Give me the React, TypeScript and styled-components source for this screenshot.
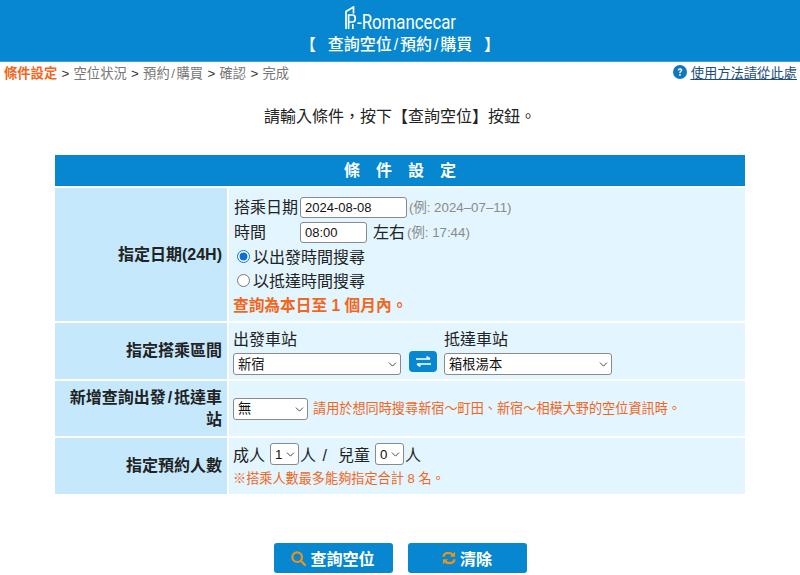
import styled, { createGlobalStyle } from "styled-components";
import { ChevronDown } from "lucide-react";

const FONT = '"Liberation Sans", "Noto Sans CJK TC", sans-serif';

const GlobalStyle = createGlobalStyle`
html, body {
    margin: 0;
    padding: 0;
    background: #fff;
    font-family: ${FONT};
    color: #222;
}
* {
    box-sizing: border-box;
}
`;

const steps = ["空位状況", "預約/購買", "確認", "完成"];

// the slash is wider in the reference than in Liberation Sans
function withSlash(text: string) {
    return text.split("/").map((part, i) => (
        <span key={part}>
            {i > 0 && <Slash>/</Slash>}
            {part}
        </span>
    ));
}

function Picker({ value, width }: { value: string; width: number }) {
    return (
        <PickerWrap $width={width}>
            <PickerSelect defaultValue={value}>
                <option>{value}</option>
            </PickerSelect>
            <PickerArrow><ChevronDown size={13} strokeWidth={1.8} /></PickerArrow>
        </PickerWrap>
    );
}

export default function App() {
    return (
        <Page>
            <GlobalStyle />
            <Header>
                <Logo>
                    <svg width="12" height="23" viewBox="0 0 12 23" fill="none" stroke="#fff" strokeWidth="1.7">
                        <path d="M1 23V5.5L8.5 1V7.5" />
                        <path d="M3.6 23V9H7.6C11.2 9 11.2 16 7.6 16H3.6" />
                        <path d="M7.8 23V18" />
                    </svg>
                    <LogoText>-Romancecar</LogoText>
                </Logo>
                <HeaderTitle>
                    <span>【</span>
                    <span>{withSlash("查詢空位/預約/購買")}</span>
                    <span>】</span>
                </HeaderTitle>
            </Header>

            <Crumbs>
                <Steps>
                    <ActiveStep>條件設定</ActiveStep>
                    {steps.map((s) => (
                        <span key={s}>
                            <Sep>&gt;</Sep>
                            <Step>{withSlash(s)}</Step>
                        </span>
                    ))}
                </Steps>
                <HelpLink href="#">
                    <svg width="14" height="14" viewBox="0 0 14 14">
                        <circle cx="7" cy="7" r="7" fill="#0f78bd" />
                        <path d="M4.7 5.4C4.8 3.9 5.8 3.2 7.1 3.2C8.4 3.2 9.4 4 9.4 5.1C9.4 6.5 7.7 6.6 7.7 8.1H6.2C6.2 6.1 7.7 6 7.7 5.2C7.7 4.8 7.4 4.6 7 4.6C6.6 4.6 6.3 4.9 6.2 5.4Z" fill="#fff" />
                        <rect x="6.2" y="9" width="1.5" height="1.6" fill="#fff" />
                    </svg>
                    <HelpText>使用方法請從此處</HelpText>
                </HelpLink>
            </Crumbs>

            <Intro>請輸入條件，按下【查詢空位】按鈕。</Intro>

            <FormTable>
                <TableHead>條件設定</TableHead>

                <Label $height={133}>指定日期(24H)</Label>
                <Cell>
                    <Line>
                        <FieldName>搭乘日期</FieldName>
                        <TextField $width={107} defaultValue="2024-08-08" />
                        <Example>(例: 2024–07–11)</Example>
                    </Line>
                    <Line>
                        <FieldName>時間</FieldName>
                        <TextField $width={67} defaultValue="08:00" />
                        <AfterField>左右</AfterField>
                        <Example>(例: 17:44)</Example>
                    </Line>
                    <RadioLine>
                        <Radio type="radio" name="mode" defaultChecked />
                        以出發時間搜尋
                    </RadioLine>
                    <RadioLine>
                        <Radio type="radio" name="mode" />
                        以抵達時間搜尋
                    </RadioLine>
                    <Warning>查詢為本日至 1 個月內。</Warning>
                </Cell>

                <Label $height={56}>指定搭乘區間</Label>
                <StationCell>
                    <Station>
                        <StationName>出發車站</StationName>
                        <Picker value="新宿" width={168} />
                    </Station>
                    <SwapButton type="button" aria-label="swap">
                        <svg width="15" height="11" viewBox="0 0 15 11" fill="none" stroke="#fff" strokeWidth="1.6">
                            <path d="M0 3H14M10.5 0.6L14 3" />
                            <path d="M15 8H1M4.5 10.4L1 8" />
                        </svg>
                    </SwapButton>
                    <Station>
                        <StationName>抵達車站</StationName>
                        <Picker value="箱根湯本" width={168} />
                    </Station>
                </StationCell>

                <Label $height={55}><div>{withSlash("新增查詢出發/抵達車站")}</div></Label>
                <ExtraCell>
                    <Picker value="無" width={75} />
                    <Note>請用於想同時搜尋新宿～町田、新宿～相模大野的空位資訊時。</Note>
                </ExtraCell>

                <Label $height={56}>指定預約人數</Label>
                <PeopleCell>
                    <PeopleLine>
                        <PersonLabel>成人</PersonLabel>
                        <Picker value="1" width={29} />
                        <PersonUnit>人 /</PersonUnit>
                        <ChildLabel>兒童</ChildLabel>
                        <Picker value="0" width={29} />
                        <PersonUnit>人</PersonUnit>
                    </PeopleLine>
                    <Note>※搭乘人數最多能夠指定合計 8 名。</Note>
                </PeopleCell>
            </FormTable>

            <Actions>
                <ActionButton type="button">
                    <svg width="15" height="15" viewBox="0 0 15 15" fill="none" stroke="#f39019" strokeWidth="2.2">
                        <circle cx="6.2" cy="6.2" r="4.8" />
                        <path d="M9.8 9.8L14 14" strokeLinecap="round" />
                    </svg>
                    查詢空位
                </ActionButton>
                <ActionButton type="button">
                    <svg width="14" height="14" viewBox="0 0 15 15" fill="none" stroke="#f39019" strokeWidth="2.4">
                        <path d="M1.4 6.2C2 3.6 4 2 6.9 2C9 2 10.8 2.8 12.2 4.6" />
                        <path d="M13.6 8.8C13 11.4 11 13 8.1 13C6 13 4.2 12.2 2.8 10.4" />
                        <path d="M14 0.6V6.2H8.6Z" fill="#f39019" stroke="none" />
                        <path d="M1 14.4V8.8H6.4Z" fill="#f39019" stroke="none" />
                    </svg>
                    清除
                </ActionButton>
            </Actions>
        </Page>
    );
}

const Page = styled("div")`
width: 800px;
height: 575px;
overflow: hidden;
`;

const Header = styled("header")`
height: 62px;
background: #0687cf;
border-bottom: 1px solid #3aa2dc;
color: #fff;
display: flex;
flex-direction: column;
align-items: center;
padding-top: 5px;
`;

const Logo = styled("div")`
display: flex;
align-items: flex-end;
height: 24px;
width: 111px;
`;

const LogoText = styled("span")`
font-family: "Roboto", sans-serif;
font-size: 21px;
line-height: 21px;
display: inline-block;
width: 99px;
margin-bottom: -4px;
transform: scaleX(0.8);
transform-origin: left bottom;
white-space: nowrap;
`;

const HeaderTitle = styled("div")`
display: flex;
justify-content: space-between;
width: 200px;
font-size: 16px;
line-height: 22px;
margin-top: 5px;
font-weight: 500;
`;

const Slash = styled("span")`
margin: 0 0.12em;
`;

const Crumbs = styled("nav")`
display: flex;
justify-content: space-between;
align-items: center;
height: 20px;
padding: 0 3px 0 4px;
font-size: 13.3px;
`;

const Steps = styled("div")`
display: flex;
`;

const ActiveStep = styled("span")`
color: #f4661b;
font-weight: 700;
`;

const Sep = styled("span")`
color: #333;
margin: 0 4.3px;
font-size: 13.3px;
`;

const Step = styled("span")`
color: #777;
`;

const HelpLink = styled("a")`
display: flex;
align-items: center;
gap: 4px;
color: #1d4f79;
font-size: 13.3px;
`;

const HelpText = styled("span")`
text-decoration: underline;
`;

const Intro = styled("p")`
margin: 25px 0 0;
text-align: center;
font-size: 16px;
line-height: 20px;
color: #222;
`;

const FormTable = styled("section")`
margin: 28px 55px 0;
display: grid;
grid-template-columns: 172px 516px;
column-gap: 2px;
row-gap: 2px;
`;

const TableHead = styled("div")`
grid-column: 1 / 3;
height: 31px;
background: #0687cf;
color: #fff;
font-size: 16px;
font-weight: 700;
letter-spacing: 16px;
text-indent: 16px;
text-align: center;
line-height: 31px;
`;

const Label = styled("div")<{ $height: number }>`
height: ${(p) => p.$height}px;
background: #c5e8fc;
display: flex;
align-items: center;
justify-content: flex-end;
text-align: right;
padding: 0 5px 0 14px;
font-size: 16px;
font-weight: 700;
line-height: 22px;
color: #222;
`;

const Cell = styled("div")`
background: #e3f5fe;
padding: 6px 4px 0 5px;
font-size: 16px;
`;

const Line = styled("div")`
display: flex;
align-items: center;
height: 24px;
margin-bottom: 1px;
`;

const FieldName = styled("span")`
width: 66px;
flex: none;
`;

const TextField = styled("input")<{ $width: number }>`
width: ${(p) => p.$width}px;
height: 21px;
margin-top: 2px;
border: 1px solid #8a8a8a;
border-radius: 3px;
padding: 0 4px;
font: 13px ${FONT};
color: #111;
background: #fff;
`;

const AfterField = styled("span")`
margin-left: 6px;
`;

const Example = styled("span")`
margin-left: 2px;
font-size: 13.3px;
color: #8a8a8a;
`;

const RadioLine = styled("label")`
display: flex;
align-items: center;
height: 24px;
padding-left: 3px;
`;

const Radio = styled("input")`
margin: 0 3px 0 0;
width: 13px;
height: 13px;
accent-color: #0a6fd6;
`;

const Warning = styled("div")`
margin-top: 3px;
font-size: 15.7px;
font-weight: 700;
line-height: 22px;
color: #f4661b;
margin-left: -1px;
`;

const StationCell = styled("div")`
background: #e3f5fe;
padding: 6px 0 4px 4px;
display: flex;
align-items: flex-end;
font-size: 16px;
`;

const Station = styled("div")`
display: flex;
flex-direction: column;
`;

const StationName = styled("span")`
line-height: 22px;
margin-bottom: 2px;
`;

const SwapButton = styled("button")`
width: 28px;
height: 21px;
margin: 0 7px 3px 8px;
padding: 0;
border: none;
border-radius: 4px;
background: #0687cf;
display: flex;
align-items: center;
justify-content: center;
`;

const PickerWrap = styled("div")<{ $width: number }>`
position: relative;
width: ${(p) => p.$width}px;
height: 22px;
flex: none;
`;

const PickerSelect = styled("select")`
appearance: none;
width: 100%;
height: 100%;
border: 1px solid #8a8a8a;
border-radius: 3px;
background: #fff;
padding: 0 4px;
font: 13.3px ${FONT};
color: #111;
`;

const PickerArrow = styled("span")`
position: absolute;
right: 2px;
top: 5px;
display: flex;
color: #444;
pointer-events: none;
`;

const ExtraCell = styled("div")`
background: #e3f5fe;
padding-left: 4px;
display: flex;
align-items: center;
gap: 5px;
`;

const Note = styled("span")`
color: #f4661b;
font-size: 13.15px;
line-height: 18px;
`;

const PeopleCell = styled("div")`
background: #e3f5fe;
padding: 4px 0 0 4px;
display: flex;
flex-direction: column;
gap: 4px;
`;

const PeopleLine = styled("div")`
display: flex;
align-items: center;
font-size: 16px;
height: 24px;
word-spacing: 2px;
`;

const PersonLabel = styled("span")`
margin-right: 5px;
`;

const PersonUnit = styled("span")`
margin-left: 1px;
`;

const ChildLabel = styled("span")`
margin-left: 11px;
margin-right: 5px;
`;

const Actions = styled("div")`
display: flex;
justify-content: center;
gap: 15px;
margin-top: 49px;
`;

const ActionButton = styled("button")`
width: 119px;
height: 30px;
border: none;
border-radius: 3px;
background: #0687cf;
color: #fff;
font: 700 16px ${FONT};
display: flex;
align-items: center;
justify-content: center;
gap: 4px;
padding: 0;
`;
